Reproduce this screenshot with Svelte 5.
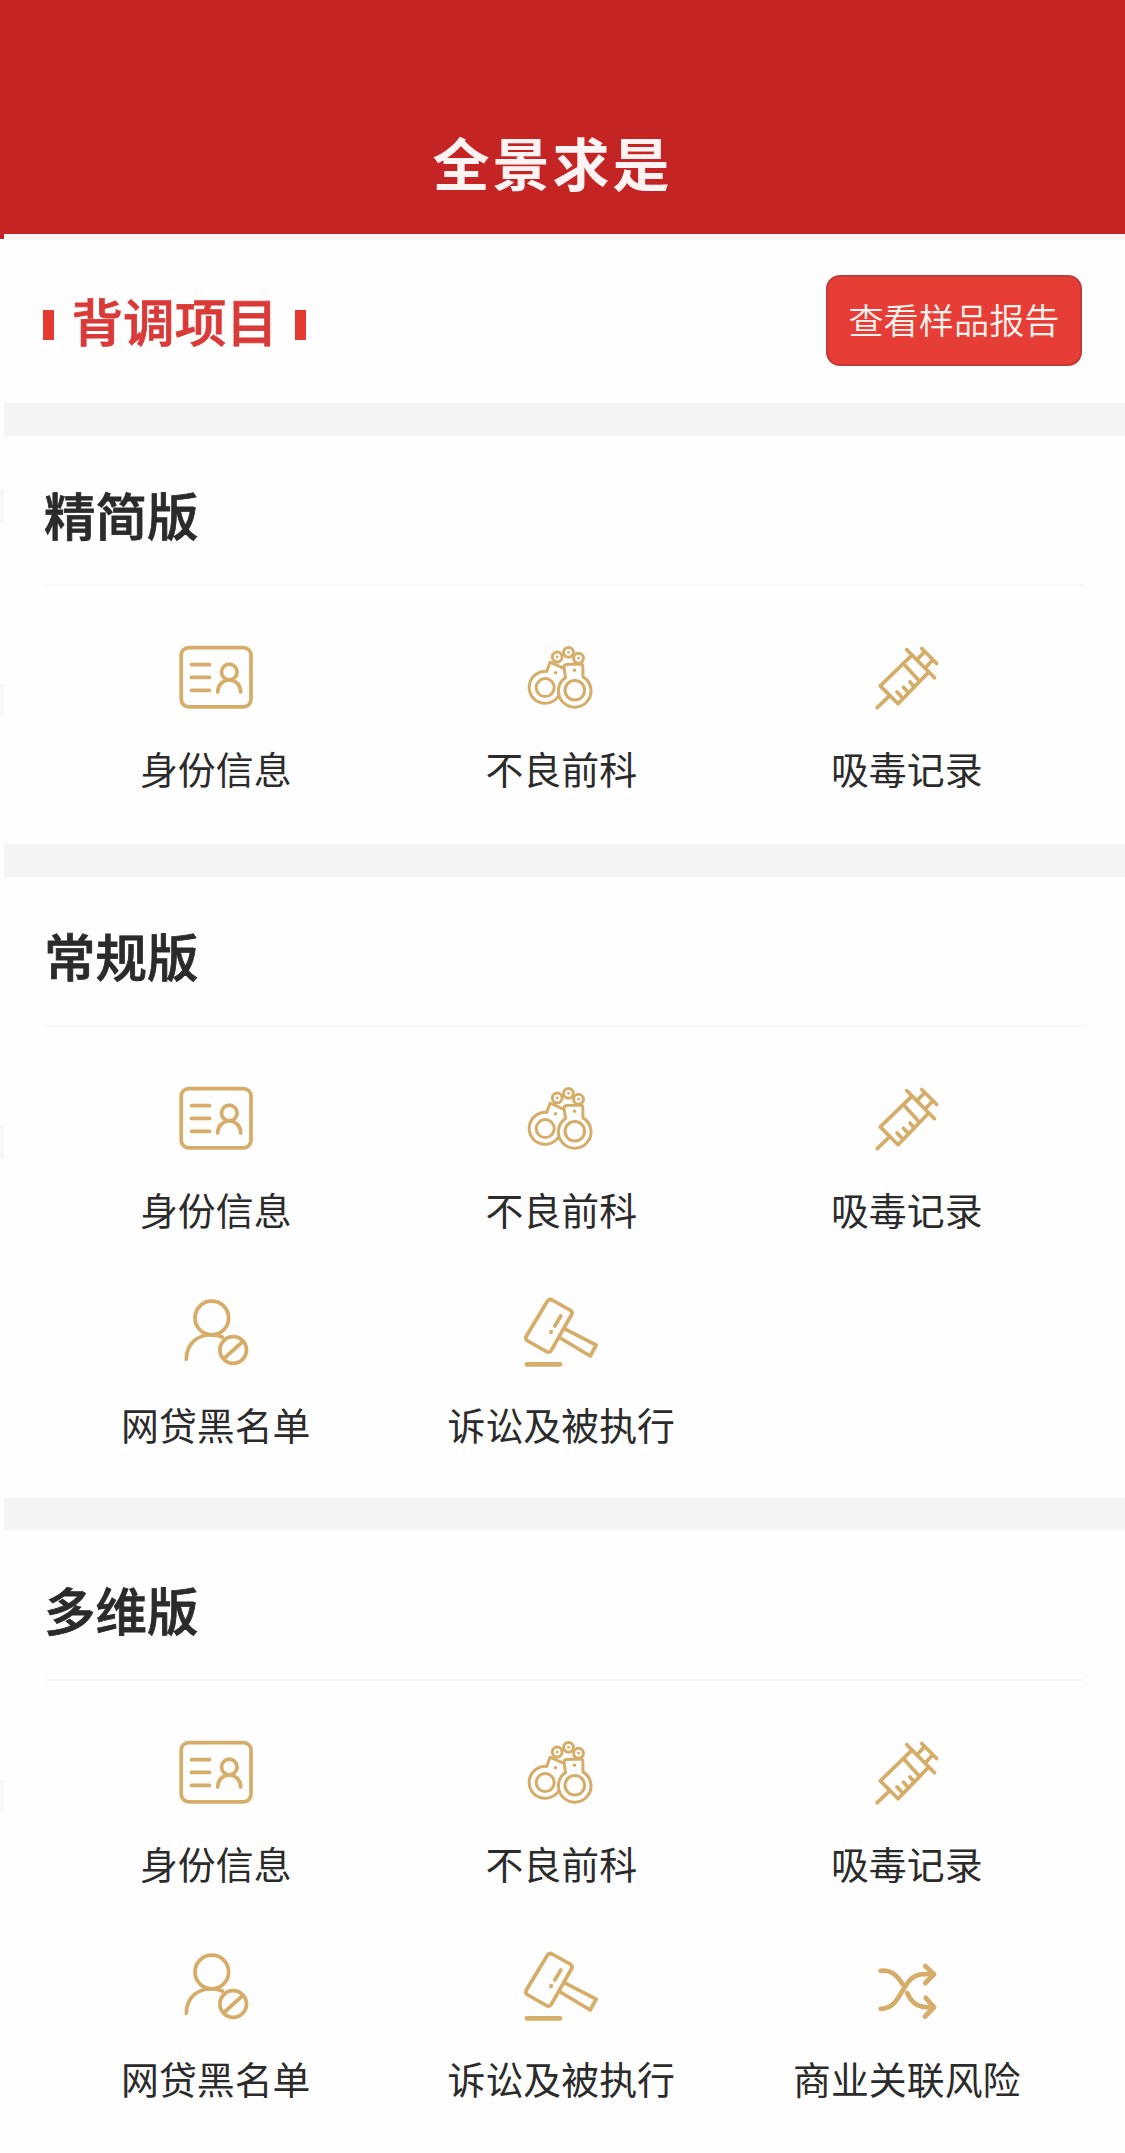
<script lang="ts">
  type Item = { icon: string; label: string };

  const identity: Item = { icon: 'card', label: '身份信息' };
  const record: Item = { icon: 'cuffs', label: '不良前科' };
  const drugs: Item = { icon: 'syringe', label: '吸毒记录' };
  const loans: Item = { icon: 'blocked', label: '网贷黑名单' };
  const lawsuits: Item = { icon: 'gavel', label: '诉讼及被执行' };
  const business: Item = { icon: 'shuffle', label: '商业关联风险' };

  const plans = [
    { name: '精简版', items: [identity, record, drugs] },
    { name: '常规版', items: [identity, record, drugs, loans, lawsuits] },
    { name: '多维版', items: [identity, record, drugs, loans, lawsuits, business] },
  ];
</script>

{#snippet icon(name: string)}
  <svg class="icon" viewBox="0 0 100 100" aria-hidden="true">
    {#if name === 'card'}
      <rect x="15.2" y="20.6" width="69.8" height="59.2" rx="7.5" />
      <path d="M25.5 37.7h18M25.5 50.4h18M25.5 63.3h18" />
      <circle cx="63.3" cy="45" r="7.8" />
      <path d="M51.7 65c0-7 5-12 11.5-12s11.5 5 11.5 12" />
    {:else if name === 'cuffs'}
      <g class="thin">
        <path d="M51.8 40.8 39 35.2l-3.3 9.2A16 16 0 1 0 47.6 69" />
        <path d="M54.5 50.5 53 40.3q0-2.5 2.5-2.8l14-.6q2.3 0 2.3 2.4l.2 10.6a16.3 16.3 0 1 1-17.5.6" />
        <circle cx="34.2" cy="60.6" r="9" />
        <circle cx="63.8" cy="63.3" r="9.8" />
        <circle cx="46.2" cy="30" r="4.9" />
        <circle cx="57.5" cy="25.3" r="4.9" />
        <circle cx="67.5" cy="31.2" r="4.9" />
      </g>
      <g class="dots">
        <circle cx="44.5" cy="45.7" r="1.8" />
        <circle cx="63.5" cy="43.3" r="1.8" />
        <circle cx="46.2" cy="30" r="1.4" />
        <circle cx="57.5" cy="25.3" r="1.4" />
        <circle cx="67.5" cy="31.2" r="1.4" />
      </g>
    {:else if name === 'syringe'}
      <path d="M53.7 29.4 23.3 58.9l17.8 17.8 30.4-31.4" />
      <path d="m49.7 22.6 27.8 28.2M64.7 21.5l15 15M60.3 32.3l7-7.2M69 40l7-7.2" />
      <path d="m47.7 38 14.3 15.7M40 65l4 4.3M46.5 60.3l4.5 5M53 55l4.3 5M31.7 69.7 20.2 80.7" />
    {:else if name === 'blocked'}
      <circle cx="45.8" cy="35" r="16.8" />
      <path d="M20.3 76.3C20.5 61 31 52 44.5 52q7 0 11.8 2" />
      <circle cx="67.2" cy="67" r="13.3" />
      <path d="m58.5 75 17.8-16" />
    {:else if name === 'gavel'}
      <path d="M42 17.5 59 27q3.2 2 1.4 5L40.3 67.3q-1.7 3-4.9 1.2L16.8 58q-3.2-1.8-1.4-5L36.2 18.5q2.2-3.3 5.8-1z" />
      <path d="m53.8 45.8 31.4 16.4-6 10.8-30-18" />
      <path d="m49.8 33-6 10M40.3 48.6l-.4.8" />
      <path class="thick" d="M16 81.3h33" />
    {:else if name === 'shuffle'}
      <g class="thick">
        <path d="M23.7 33.8C34 32.5 40 38 45.3 46.8" />
        <path d="M23.7 71.9C47 71.5 43 37.2 67 37.2h9.5" />
        <path d="M50.3 56.2C55 66 60 71 76.5 70.3" />
        <path d="m68.3 29 8.7 8.2-8.7 8.8M68.7 60.8l8.3 9.5-9 9.2" />
      </g>
    {/if}
  </svg>
{/snippet}

<div class="page">
  <header class="topbar">
    <h1>全景求是</h1>
  </header>

  <main>
    <div class="intro">
      <h2>背调项目</h2>
      <button type="button">查看样品报告</button>
    </div>

    {#each plans as plan}
      <section class="plan">
        <h3>{plan.name}</h3>
        <ul>
          {#each plan.items as item}
            <li>
              {@render icon(item.icon)}
              <span>{item.label}</span>
            </li>
          {/each}
        </ul>
      </section>
    {/each}
  </main>
</div>

<style>
  :global(body) {
    margin: 0;
    background: #fefefe;
  }
  .page {
    --tab: linear-gradient(#f7f7f7, #f7f7f7);
    height: 2153px;
    overflow: hidden;
    /* faint tabs down the left gutter, and the end of the red bar */
    background:
      var(--tab) 0 489px / 4px 33px,
      var(--tab) 0 684px / 4px 33px,
      var(--tab) 0 1126px / 4px 33px,
      var(--tab) 0 1780px / 4px 33px,
      linear-gradient(#c41f24, #c41f24) 0 0 / 4px 239px;
    background-repeat: no-repeat;
    font-family: 'Noto Sans CJK SC', 'Noto Sans', sans-serif;
    color: #2b2b2b;
  }
  h1,
  h2,
  h3,
  ul {
    margin: 0;
    padding: 0;
  }
  .topbar {
    display: flex;
    justify-content: center;
    height: 234px;
    box-sizing: border-box;
    padding: 119px 20px 0 0;
    background: #c42424;
  }
  h1 {
    font-size: 57px;
    line-height: 84px;
    font-weight: 700;
    letter-spacing: 3px;
    color: #fdf3f3;
  }
  main {
    margin-left: 4px;
  }
  .intro {
    display: flex;
    justify-content: space-between;
    align-items: center;
    height: 169px;
    box-sizing: border-box;
    padding: 0 43px 3px 39px;
    border-top: 6px solid #f4f4f4;
  }
  h2 {
    display: flex;
    align-items: center;
    gap: 17.5px;
    font-size: 51.6px;
    line-height: 72px;
    font-weight: 500;
    color: #d93a38;
    -webkit-text-stroke: 0.8px;
  }
  h2::before,
  h2::after {
    content: '';
    width: 11px;
    height: 30px;
    margin-top: 10px;
    background: #e43a32;
  }
  button {
    width: 256px;
    height: 91px;
    padding: 0 0 4px;
    border: 2px solid #c23a37;
    border-radius: 14px;
    background: #e63e36;
    color: #fff3ee;
    font-family: inherit;
    font-size: 35.2px;
    font-weight: 350;
    white-space: nowrap;
  }
  .plan {
    padding: 0 41px 50px 39px;
    border-top: 33px solid #f4f4f4;
  }
  .plan:nth-of-type(2) {
    padding-bottom: 48px;
  }
  h3 {
    height: 148px;
    margin-left: 2px;
    border-bottom: 2px solid #f7f7f7;
    font-size: 51.5px;
    line-height: 155px;
    font-weight: 500;
    text-indent: -1px;
    -webkit-text-stroke: 0.8px;
  }
  ul {
    display: grid;
    grid-template-columns: repeat(3, 345.5px);
    row-gap: 48px;
    padding-top: 41px;
    list-style: none;
  }
  li {
    display: flex;
    flex-direction: column;
    align-items: center;
    gap: 15px;
  }
  li span {
    font-size: 37.9px;
    line-height: 52px;
    font-weight: 400;
    white-space: nowrap;
  }
  .icon {
    width: 100px;
    height: 100px;
    fill: none;
    stroke: #d5ad69;
    stroke-width: 3.7;
    stroke-linecap: round;
    stroke-linejoin: round;
  }
  .thin {
    stroke-width: 3;
  }
  .thick {
    stroke-width: 4.8;
  }
  .dots {
    fill: #d5ad69;
    stroke: none;
  }
</style>
